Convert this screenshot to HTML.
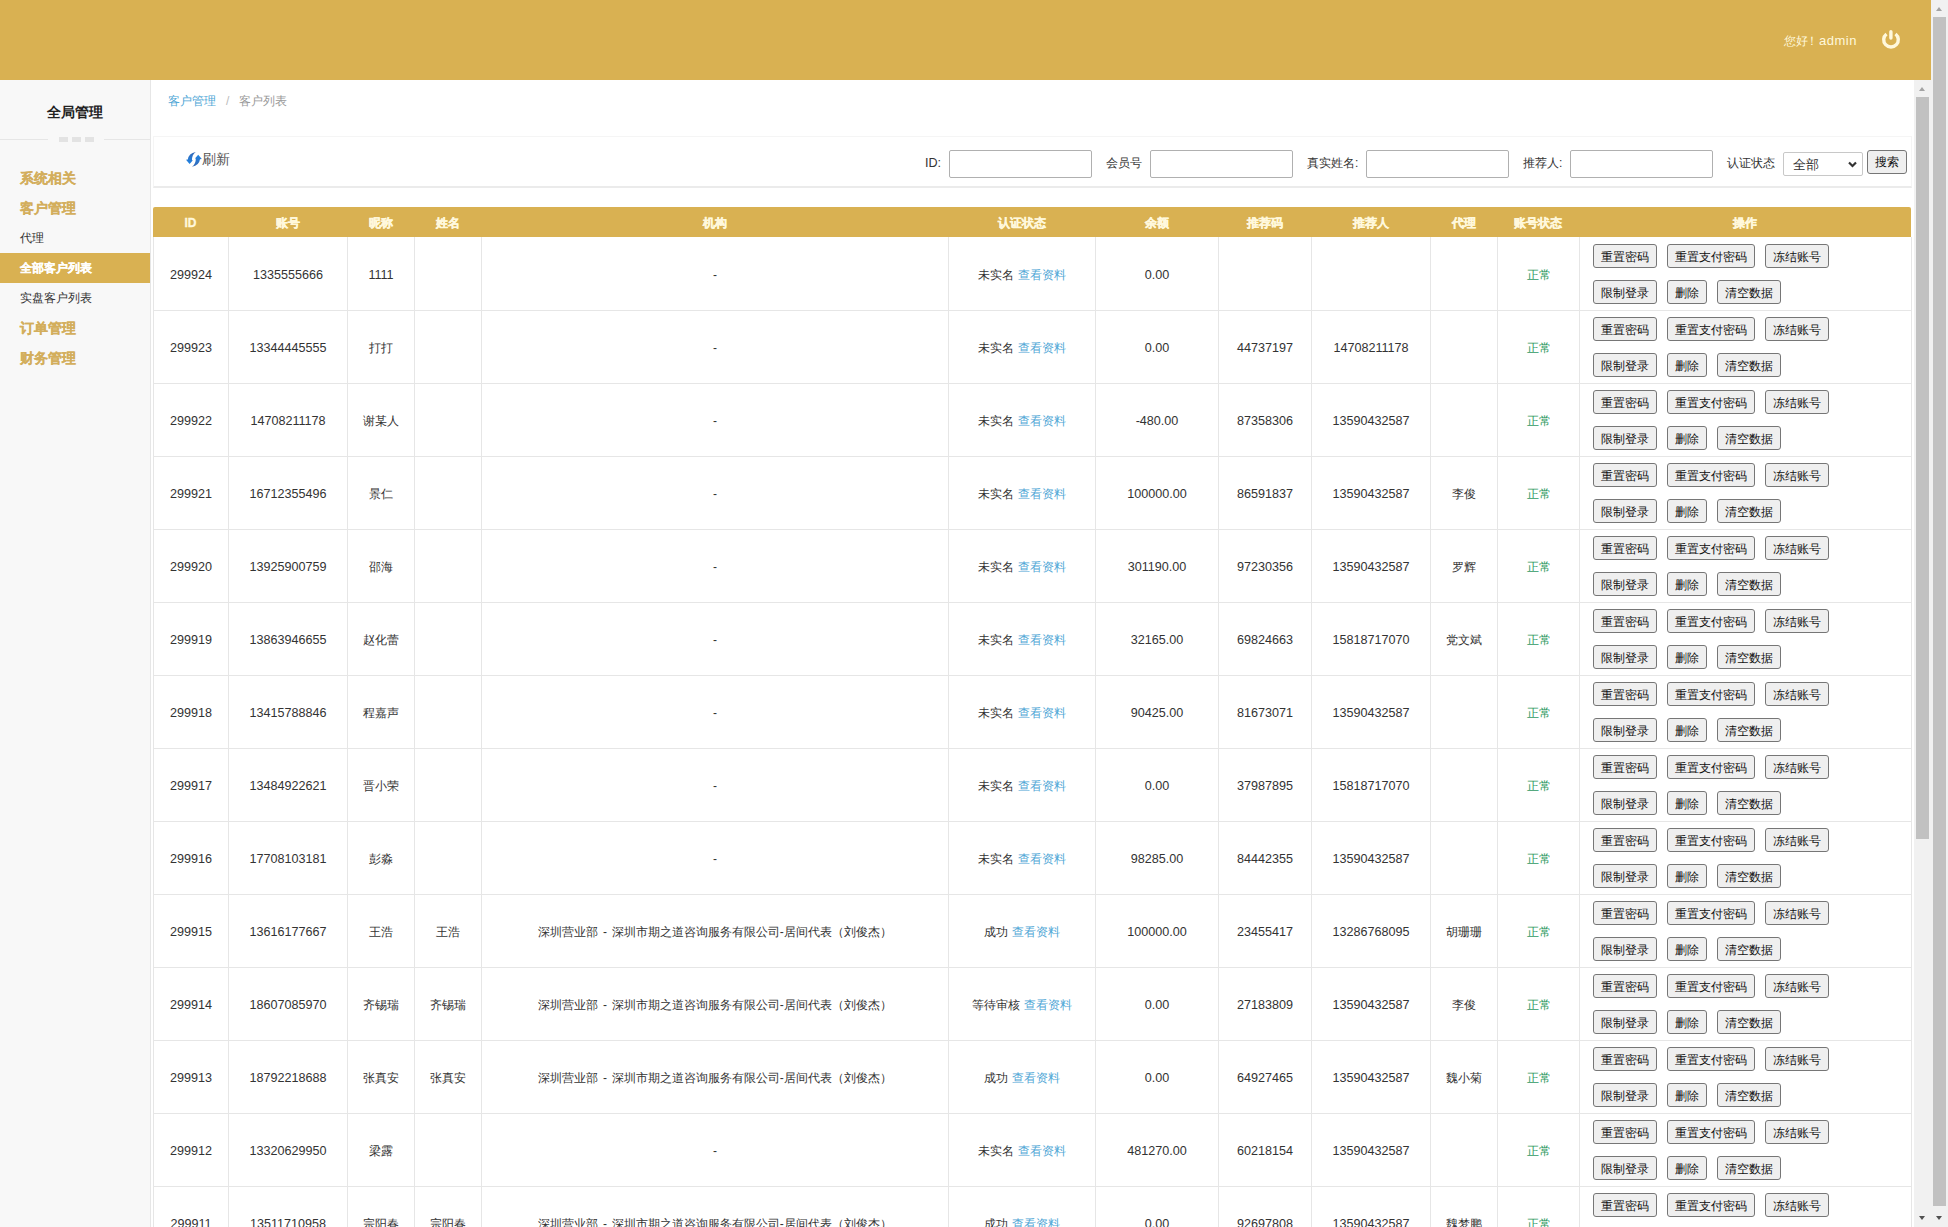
<!DOCTYPE html>
<html><head><meta charset="utf-8"><title>客户列表</title>
<style>
*{box-sizing:border-box;margin:0;padding:0}
html,body{width:1948px;height:1227px;overflow:hidden;background:#fff;font-family:"Liberation Sans",sans-serif;color:#333}
.abs{position:absolute}
#hdr{position:absolute;left:0;top:0;width:1931px;height:80px;background:#d9b152}
#hello{position:absolute;left:1784px;top:33px;font-size:12px;color:#fff8dc;white-space:nowrap;line-height:16px}
#hello .en{font-size:13px;letter-spacing:0.5px}
#power{position:absolute;left:1876px;top:26px;width:30px;height:26px}
#side{position:absolute;left:0;top:80px;width:151px;height:1147px;background:#f8f8f8;border-right:1px solid #e6e6e6}
#side .title{position:absolute;left:0;top:22px;width:150px;text-align:center;font-size:14px;font-weight:bold;color:#222;line-height:20px}
#side .ln{position:absolute;top:59px;height:1px;background:#e6e6e6}
#side .dash{position:absolute;top:57px;width:9px;height:5px;background:#e3e3e3}
#side .m{position:absolute;left:0;width:150px;height:30px;line-height:30px;padding-left:20px;white-space:nowrap}
#side .g{font-size:14px;font-weight:bold;color:#d3ae5c;-webkit-text-stroke:0.15px #d3ae5c}
#side .s{font-size:12px;color:#333}
#side .on{background:#d9b152;color:#fff;font-weight:bold;-webkit-text-stroke:0.2px #fff}
#crumb{position:absolute;left:168px;top:93px;font-size:12px;line-height:16px;white-space:nowrap;color:#999}
#crumb .a{color:#4fa7d6}
#crumb .sep{color:#bbb;padding:0 10px 0 10px}
#card{position:absolute;left:153px;top:136px;width:1759px;height:52px;border:1px solid #f5f5f5;border-bottom:2px solid #ebebeb;background:#fff}
.lbl{position:absolute;font-size:12px;line-height:16px;color:#333;white-space:nowrap}
.inp{position:absolute;top:150px;height:28px;width:143px;border:1px solid #b0b0b0;border-radius:2px;background:#fff}
#sel{position:absolute;left:1783px;top:152px;width:80px;height:24px;border:1px solid #c8c8c8;border-radius:2px;background:#fff;font-size:13px;line-height:22px;padding-top:1px;padding-left:9px;color:#333}
#srch{position:absolute;left:1867px;top:150px;width:40px;height:24px;border:1px solid #767676;border-radius:3px;background:#efefef;font-size:12px;line-height:22px;text-align:center;color:#111}
#thead{position:absolute;left:153px;top:207px;width:1758px;height:30px;background:#d9b152;border-radius:2px 2px 0 0}
.th{position:absolute;top:0;height:30px;line-height:32px;text-align:center;font-size:12px;font-weight:bold;color:#fff8dc;white-space:nowrap;-webkit-text-stroke:0.35px #fff8dc}
.vl{position:absolute;width:1px;background:#e6e6e6}
.hl{position:absolute;height:1px;background:#e6e6e6}
.td{position:absolute;text-align:center;font-size:12px;line-height:16px;color:#333;white-space:nowrap}
.num{font-size:12.6px;position:relative;top:0px}
.lk{color:#4fa7d6}
.ok{color:#2f9a62}
.btn{position:absolute;height:24px;border:1px solid #767676;border-radius:3px;background:#efefef;font-size:12px;line-height:22px;padding-top:1px;text-align:center;color:#111;white-space:nowrap}
.sb{position:absolute;background:#f1f1f1}
.thumb{position:absolute;background:#c1c1c1}
.arr{position:absolute;width:0;height:0;border-left:4px solid transparent;border-right:4px solid transparent}
</style></head><body>

<div id="hdr"></div>
<div id="hello">您好<span style="margin-left:-2px">！</span><span class="en" style="margin-left:1px">admin</span></div>
<svg id="power" viewBox="0 0 30 26"><path d="M10.5 8.0 A7.3 7.3 0 1 0 19.5 8.0" fill="none" stroke="#fff8dc" stroke-width="3.4"/><line x1="14.9" y1="5.7" x2="14.9" y2="12.1" stroke="#fff8dc" stroke-width="3.4" stroke-linecap="round"/></svg>
<div id="side">
<div class="title">全局管理</div>
<div class="ln" style="left:0;width:48px"></div>
<div class="dash" style="left:59px"></div><div class="dash" style="left:72px"></div><div class="dash" style="left:85px"></div>
<div class="ln" style="left:104px;width:46px"></div>
<div class="m g" style="top:83px">系统相关</div>
<div class="m g" style="top:113px">客户管理</div>
<div class="m s" style="top:143px">代理</div>
<div class="m s on" style="top:173px">全部客户列表</div>
<div class="m s" style="top:203px">实盘客户列表</div>
<div class="m g" style="top:233px">订单管理</div>
<div class="m g" style="top:263px">财务管理</div>
</div>
<div id="crumb"><span class="a">客户管理</span><span class="sep">/</span>客户列表</div>
<div id="card"></div>
<svg class="abs" style="left:182px;top:148px" width="24" height="22" viewBox="0 0 24 22"><defs><linearGradient id="g1" x1="0" y1="0" x2="0" y2="1"><stop offset="0" stop-color="#3568b5"/><stop offset="1" stop-color="#1f84e4"/></linearGradient><linearGradient id="g2" x1="0" y1="1" x2="0" y2="0"><stop offset="0" stop-color="#3568b5"/><stop offset="1" stop-color="#1f84e4"/></linearGradient></defs><path d="M13.8 4.0 Q6.6 5.4 5.8 11.5 L4.0 11.7 L7.6 15.9 L10.9 12.3 L10.0 12.2 Q9.9 6.6 13.8 4.0 Z" fill="url(#g1)"/><path d="M10.0 18.7 Q17.2 17.3 18.0 11.2 L19.8 11.0 L16.2 6.8 L12.9 10.4 L13.8 10.5 Q13.9 16.1 10.0 18.7 Z" fill="url(#g2)"/></svg>
<div class="lbl" style="left:202px;top:150px;font-size:14px;line-height:18px;color:#555">刷新</div>
<div class="lbl" style="left:925px;top:155px"><span class="num">ID:</span></div>
<div class="inp" style="left:949px"></div>
<div class="lbl" style="left:1106px;top:155px">会员号</div>
<div class="inp" style="left:1150px"></div>
<div class="lbl" style="left:1307px;top:155px">真实姓名:</div>
<div class="inp" style="left:1366px"></div>
<div class="lbl" style="left:1523px;top:155px">推荐人:</div>
<div class="inp" style="left:1570px"></div>
<div class="lbl" style="left:1727px;top:155px">认证状态</div>
<div id="sel">全部<svg class="abs" style="left:64px;top:8px" width="9" height="7" viewBox="0 0 9 7"><path d="M1 1.5 L4.5 5 L8 1.5" fill="none" stroke="#333" stroke-width="2.2"/></svg></div>
<div id="srch">搜索</div>
<div id="thead"></div>
<div class="th" style="left:153px;width:75px;top:207px">ID</div>
<div class="th" style="left:228px;width:119px;top:207px">账号</div>
<div class="th" style="left:347px;width:67px;top:207px">昵称</div>
<div class="th" style="left:414px;width:67px;top:207px">姓名</div>
<div class="th" style="left:481px;width:467px;top:207px">机构</div>
<div class="th" style="left:948px;width:147px;top:207px">认证状态</div>
<div class="th" style="left:1095px;width:123px;top:207px">余额</div>
<div class="th" style="left:1218px;width:93px;top:207px">推荐码</div>
<div class="th" style="left:1311px;width:119px;top:207px">推荐人</div>
<div class="th" style="left:1430px;width:67px;top:207px">代理</div>
<div class="th" style="left:1497px;width:82px;top:207px">账号状态</div>
<div class="th" style="left:1579px;width:332px;top:207px">操作</div>
<div class="vl" style="left:153px;top:237px;height:990px"></div>
<div class="vl" style="left:228px;top:237px;height:990px"></div>
<div class="vl" style="left:347px;top:237px;height:990px"></div>
<div class="vl" style="left:414px;top:237px;height:990px"></div>
<div class="vl" style="left:481px;top:237px;height:990px"></div>
<div class="vl" style="left:948px;top:237px;height:990px"></div>
<div class="vl" style="left:1095px;top:237px;height:990px"></div>
<div class="vl" style="left:1218px;top:237px;height:990px"></div>
<div class="vl" style="left:1311px;top:237px;height:990px"></div>
<div class="vl" style="left:1430px;top:237px;height:990px"></div>
<div class="vl" style="left:1497px;top:237px;height:990px"></div>
<div class="vl" style="left:1579px;top:237px;height:990px"></div>
<div class="vl" style="left:1911px;top:237px;height:990px"></div>
<div class="hl" style="left:153px;top:310px;width:1759px"></div>
<div class="hl" style="left:153px;top:383px;width:1759px"></div>
<div class="hl" style="left:153px;top:456px;width:1759px"></div>
<div class="hl" style="left:153px;top:529px;width:1759px"></div>
<div class="hl" style="left:153px;top:602px;width:1759px"></div>
<div class="hl" style="left:153px;top:675px;width:1759px"></div>
<div class="hl" style="left:153px;top:748px;width:1759px"></div>
<div class="hl" style="left:153px;top:821px;width:1759px"></div>
<div class="hl" style="left:153px;top:894px;width:1759px"></div>
<div class="hl" style="left:153px;top:967px;width:1759px"></div>
<div class="hl" style="left:153px;top:1040px;width:1759px"></div>
<div class="hl" style="left:153px;top:1113px;width:1759px"></div>
<div class="hl" style="left:153px;top:1186px;width:1759px"></div>
<div class="td" style="left:153px;width:76px;top:267px"><span class="num">299924</span></div>
<div class="td" style="left:228px;width:120px;top:267px"><span class="num">1335555666</span></div>
<div class="td" style="left:347px;width:68px;top:267px"><span class="num">1111</span></div>
<div class="td" style="left:481px;width:468px;top:267px">-</div>
<div class="td" style="left:948px;width:148px;top:267px">未实名 <span class="lk">查看资料</span></div>
<div class="td" style="left:1095px;width:124px;top:267px"><span class="num">0.00</span></div>
<div class="td" style="left:1497px;width:83px;top:267px"><span class="ok">正常</span></div>
<div class="btn" style="left:1593px;top:244px;width:64px">重置密码</div>
<div class="btn" style="left:1667px;top:244px;width:88px">重置支付密码</div>
<div class="btn" style="left:1765px;top:244px;width:64px">冻结账号</div>
<div class="btn" style="left:1593px;top:280px;width:64px">限制登录</div>
<div class="btn" style="left:1667px;top:280px;width:40px">删除</div>
<div class="btn" style="left:1717px;top:280px;width:64px">清空数据</div>
<div class="td" style="left:153px;width:76px;top:340px"><span class="num">299923</span></div>
<div class="td" style="left:228px;width:120px;top:340px"><span class="num">13344445555</span></div>
<div class="td" style="left:347px;width:68px;top:340px">打打</div>
<div class="td" style="left:481px;width:468px;top:340px">-</div>
<div class="td" style="left:948px;width:148px;top:340px">未实名 <span class="lk">查看资料</span></div>
<div class="td" style="left:1095px;width:124px;top:340px"><span class="num">0.00</span></div>
<div class="td" style="left:1218px;width:94px;top:340px"><span class="num">44737197</span></div>
<div class="td" style="left:1311px;width:120px;top:340px"><span class="num">14708211178</span></div>
<div class="td" style="left:1497px;width:83px;top:340px"><span class="ok">正常</span></div>
<div class="btn" style="left:1593px;top:317px;width:64px">重置密码</div>
<div class="btn" style="left:1667px;top:317px;width:88px">重置支付密码</div>
<div class="btn" style="left:1765px;top:317px;width:64px">冻结账号</div>
<div class="btn" style="left:1593px;top:353px;width:64px">限制登录</div>
<div class="btn" style="left:1667px;top:353px;width:40px">删除</div>
<div class="btn" style="left:1717px;top:353px;width:64px">清空数据</div>
<div class="td" style="left:153px;width:76px;top:413px"><span class="num">299922</span></div>
<div class="td" style="left:228px;width:120px;top:413px"><span class="num">14708211178</span></div>
<div class="td" style="left:347px;width:68px;top:413px">谢某人</div>
<div class="td" style="left:481px;width:468px;top:413px">-</div>
<div class="td" style="left:948px;width:148px;top:413px">未实名 <span class="lk">查看资料</span></div>
<div class="td" style="left:1095px;width:124px;top:413px"><span class="num">-480.00</span></div>
<div class="td" style="left:1218px;width:94px;top:413px"><span class="num">87358306</span></div>
<div class="td" style="left:1311px;width:120px;top:413px"><span class="num">13590432587</span></div>
<div class="td" style="left:1497px;width:83px;top:413px"><span class="ok">正常</span></div>
<div class="btn" style="left:1593px;top:390px;width:64px">重置密码</div>
<div class="btn" style="left:1667px;top:390px;width:88px">重置支付密码</div>
<div class="btn" style="left:1765px;top:390px;width:64px">冻结账号</div>
<div class="btn" style="left:1593px;top:426px;width:64px">限制登录</div>
<div class="btn" style="left:1667px;top:426px;width:40px">删除</div>
<div class="btn" style="left:1717px;top:426px;width:64px">清空数据</div>
<div class="td" style="left:153px;width:76px;top:486px"><span class="num">299921</span></div>
<div class="td" style="left:228px;width:120px;top:486px"><span class="num">16712355496</span></div>
<div class="td" style="left:347px;width:68px;top:486px">景仁</div>
<div class="td" style="left:481px;width:468px;top:486px">-</div>
<div class="td" style="left:948px;width:148px;top:486px">未实名 <span class="lk">查看资料</span></div>
<div class="td" style="left:1095px;width:124px;top:486px"><span class="num">100000.00</span></div>
<div class="td" style="left:1218px;width:94px;top:486px"><span class="num">86591837</span></div>
<div class="td" style="left:1311px;width:120px;top:486px"><span class="num">13590432587</span></div>
<div class="td" style="left:1430px;width:68px;top:486px">李俊</div>
<div class="td" style="left:1497px;width:83px;top:486px"><span class="ok">正常</span></div>
<div class="btn" style="left:1593px;top:463px;width:64px">重置密码</div>
<div class="btn" style="left:1667px;top:463px;width:88px">重置支付密码</div>
<div class="btn" style="left:1765px;top:463px;width:64px">冻结账号</div>
<div class="btn" style="left:1593px;top:499px;width:64px">限制登录</div>
<div class="btn" style="left:1667px;top:499px;width:40px">删除</div>
<div class="btn" style="left:1717px;top:499px;width:64px">清空数据</div>
<div class="td" style="left:153px;width:76px;top:559px"><span class="num">299920</span></div>
<div class="td" style="left:228px;width:120px;top:559px"><span class="num">13925900759</span></div>
<div class="td" style="left:347px;width:68px;top:559px">邵海</div>
<div class="td" style="left:481px;width:468px;top:559px">-</div>
<div class="td" style="left:948px;width:148px;top:559px">未实名 <span class="lk">查看资料</span></div>
<div class="td" style="left:1095px;width:124px;top:559px"><span class="num">301190.00</span></div>
<div class="td" style="left:1218px;width:94px;top:559px"><span class="num">97230356</span></div>
<div class="td" style="left:1311px;width:120px;top:559px"><span class="num">13590432587</span></div>
<div class="td" style="left:1430px;width:68px;top:559px">罗辉</div>
<div class="td" style="left:1497px;width:83px;top:559px"><span class="ok">正常</span></div>
<div class="btn" style="left:1593px;top:536px;width:64px">重置密码</div>
<div class="btn" style="left:1667px;top:536px;width:88px">重置支付密码</div>
<div class="btn" style="left:1765px;top:536px;width:64px">冻结账号</div>
<div class="btn" style="left:1593px;top:572px;width:64px">限制登录</div>
<div class="btn" style="left:1667px;top:572px;width:40px">删除</div>
<div class="btn" style="left:1717px;top:572px;width:64px">清空数据</div>
<div class="td" style="left:153px;width:76px;top:632px"><span class="num">299919</span></div>
<div class="td" style="left:228px;width:120px;top:632px"><span class="num">13863946655</span></div>
<div class="td" style="left:347px;width:68px;top:632px">赵化蕾</div>
<div class="td" style="left:481px;width:468px;top:632px">-</div>
<div class="td" style="left:948px;width:148px;top:632px">未实名 <span class="lk">查看资料</span></div>
<div class="td" style="left:1095px;width:124px;top:632px"><span class="num">32165.00</span></div>
<div class="td" style="left:1218px;width:94px;top:632px"><span class="num">69824663</span></div>
<div class="td" style="left:1311px;width:120px;top:632px"><span class="num">15818717070</span></div>
<div class="td" style="left:1430px;width:68px;top:632px">党文斌</div>
<div class="td" style="left:1497px;width:83px;top:632px"><span class="ok">正常</span></div>
<div class="btn" style="left:1593px;top:609px;width:64px">重置密码</div>
<div class="btn" style="left:1667px;top:609px;width:88px">重置支付密码</div>
<div class="btn" style="left:1765px;top:609px;width:64px">冻结账号</div>
<div class="btn" style="left:1593px;top:645px;width:64px">限制登录</div>
<div class="btn" style="left:1667px;top:645px;width:40px">删除</div>
<div class="btn" style="left:1717px;top:645px;width:64px">清空数据</div>
<div class="td" style="left:153px;width:76px;top:705px"><span class="num">299918</span></div>
<div class="td" style="left:228px;width:120px;top:705px"><span class="num">13415788846</span></div>
<div class="td" style="left:347px;width:68px;top:705px">程嘉声</div>
<div class="td" style="left:481px;width:468px;top:705px">-</div>
<div class="td" style="left:948px;width:148px;top:705px">未实名 <span class="lk">查看资料</span></div>
<div class="td" style="left:1095px;width:124px;top:705px"><span class="num">90425.00</span></div>
<div class="td" style="left:1218px;width:94px;top:705px"><span class="num">81673071</span></div>
<div class="td" style="left:1311px;width:120px;top:705px"><span class="num">13590432587</span></div>
<div class="td" style="left:1497px;width:83px;top:705px"><span class="ok">正常</span></div>
<div class="btn" style="left:1593px;top:682px;width:64px">重置密码</div>
<div class="btn" style="left:1667px;top:682px;width:88px">重置支付密码</div>
<div class="btn" style="left:1765px;top:682px;width:64px">冻结账号</div>
<div class="btn" style="left:1593px;top:718px;width:64px">限制登录</div>
<div class="btn" style="left:1667px;top:718px;width:40px">删除</div>
<div class="btn" style="left:1717px;top:718px;width:64px">清空数据</div>
<div class="td" style="left:153px;width:76px;top:778px"><span class="num">299917</span></div>
<div class="td" style="left:228px;width:120px;top:778px"><span class="num">13484922621</span></div>
<div class="td" style="left:347px;width:68px;top:778px">晋小荣</div>
<div class="td" style="left:481px;width:468px;top:778px">-</div>
<div class="td" style="left:948px;width:148px;top:778px">未实名 <span class="lk">查看资料</span></div>
<div class="td" style="left:1095px;width:124px;top:778px"><span class="num">0.00</span></div>
<div class="td" style="left:1218px;width:94px;top:778px"><span class="num">37987895</span></div>
<div class="td" style="left:1311px;width:120px;top:778px"><span class="num">15818717070</span></div>
<div class="td" style="left:1497px;width:83px;top:778px"><span class="ok">正常</span></div>
<div class="btn" style="left:1593px;top:755px;width:64px">重置密码</div>
<div class="btn" style="left:1667px;top:755px;width:88px">重置支付密码</div>
<div class="btn" style="left:1765px;top:755px;width:64px">冻结账号</div>
<div class="btn" style="left:1593px;top:791px;width:64px">限制登录</div>
<div class="btn" style="left:1667px;top:791px;width:40px">删除</div>
<div class="btn" style="left:1717px;top:791px;width:64px">清空数据</div>
<div class="td" style="left:153px;width:76px;top:851px"><span class="num">299916</span></div>
<div class="td" style="left:228px;width:120px;top:851px"><span class="num">17708103181</span></div>
<div class="td" style="left:347px;width:68px;top:851px">彭淼</div>
<div class="td" style="left:481px;width:468px;top:851px">-</div>
<div class="td" style="left:948px;width:148px;top:851px">未实名 <span class="lk">查看资料</span></div>
<div class="td" style="left:1095px;width:124px;top:851px"><span class="num">98285.00</span></div>
<div class="td" style="left:1218px;width:94px;top:851px"><span class="num">84442355</span></div>
<div class="td" style="left:1311px;width:120px;top:851px"><span class="num">13590432587</span></div>
<div class="td" style="left:1497px;width:83px;top:851px"><span class="ok">正常</span></div>
<div class="btn" style="left:1593px;top:828px;width:64px">重置密码</div>
<div class="btn" style="left:1667px;top:828px;width:88px">重置支付密码</div>
<div class="btn" style="left:1765px;top:828px;width:64px">冻结账号</div>
<div class="btn" style="left:1593px;top:864px;width:64px">限制登录</div>
<div class="btn" style="left:1667px;top:864px;width:40px">删除</div>
<div class="btn" style="left:1717px;top:864px;width:64px">清空数据</div>
<div class="td" style="left:153px;width:76px;top:924px"><span class="num">299915</span></div>
<div class="td" style="left:228px;width:120px;top:924px"><span class="num">13616177667</span></div>
<div class="td" style="left:347px;width:68px;top:924px">王浩</div>
<div class="td" style="left:414px;width:68px;top:924px">王浩</div>
<div class="td" style="left:481px;width:468px;top:924px"><span style="word-spacing:1.5px">深圳营业部 - 深圳市期之道咨询服务有限公司-居间代表（刘俊杰）</span></div>
<div class="td" style="left:948px;width:148px;top:924px">成功 <span class="lk">查看资料</span></div>
<div class="td" style="left:1095px;width:124px;top:924px"><span class="num">100000.00</span></div>
<div class="td" style="left:1218px;width:94px;top:924px"><span class="num">23455417</span></div>
<div class="td" style="left:1311px;width:120px;top:924px"><span class="num">13286768095</span></div>
<div class="td" style="left:1430px;width:68px;top:924px">胡珊珊</div>
<div class="td" style="left:1497px;width:83px;top:924px"><span class="ok">正常</span></div>
<div class="btn" style="left:1593px;top:901px;width:64px">重置密码</div>
<div class="btn" style="left:1667px;top:901px;width:88px">重置支付密码</div>
<div class="btn" style="left:1765px;top:901px;width:64px">冻结账号</div>
<div class="btn" style="left:1593px;top:937px;width:64px">限制登录</div>
<div class="btn" style="left:1667px;top:937px;width:40px">删除</div>
<div class="btn" style="left:1717px;top:937px;width:64px">清空数据</div>
<div class="td" style="left:153px;width:76px;top:997px"><span class="num">299914</span></div>
<div class="td" style="left:228px;width:120px;top:997px"><span class="num">18607085970</span></div>
<div class="td" style="left:347px;width:68px;top:997px">齐锡瑞</div>
<div class="td" style="left:414px;width:68px;top:997px">齐锡瑞</div>
<div class="td" style="left:481px;width:468px;top:997px"><span style="word-spacing:1.5px">深圳营业部 - 深圳市期之道咨询服务有限公司-居间代表（刘俊杰）</span></div>
<div class="td" style="left:948px;width:148px;top:997px">等待审核 <span class="lk">查看资料</span></div>
<div class="td" style="left:1095px;width:124px;top:997px"><span class="num">0.00</span></div>
<div class="td" style="left:1218px;width:94px;top:997px"><span class="num">27183809</span></div>
<div class="td" style="left:1311px;width:120px;top:997px"><span class="num">13590432587</span></div>
<div class="td" style="left:1430px;width:68px;top:997px">李俊</div>
<div class="td" style="left:1497px;width:83px;top:997px"><span class="ok">正常</span></div>
<div class="btn" style="left:1593px;top:974px;width:64px">重置密码</div>
<div class="btn" style="left:1667px;top:974px;width:88px">重置支付密码</div>
<div class="btn" style="left:1765px;top:974px;width:64px">冻结账号</div>
<div class="btn" style="left:1593px;top:1010px;width:64px">限制登录</div>
<div class="btn" style="left:1667px;top:1010px;width:40px">删除</div>
<div class="btn" style="left:1717px;top:1010px;width:64px">清空数据</div>
<div class="td" style="left:153px;width:76px;top:1070px"><span class="num">299913</span></div>
<div class="td" style="left:228px;width:120px;top:1070px"><span class="num">18792218688</span></div>
<div class="td" style="left:347px;width:68px;top:1070px">张真安</div>
<div class="td" style="left:414px;width:68px;top:1070px">张真安</div>
<div class="td" style="left:481px;width:468px;top:1070px"><span style="word-spacing:1.5px">深圳营业部 - 深圳市期之道咨询服务有限公司-居间代表（刘俊杰）</span></div>
<div class="td" style="left:948px;width:148px;top:1070px">成功 <span class="lk">查看资料</span></div>
<div class="td" style="left:1095px;width:124px;top:1070px"><span class="num">0.00</span></div>
<div class="td" style="left:1218px;width:94px;top:1070px"><span class="num">64927465</span></div>
<div class="td" style="left:1311px;width:120px;top:1070px"><span class="num">13590432587</span></div>
<div class="td" style="left:1430px;width:68px;top:1070px">魏小菊</div>
<div class="td" style="left:1497px;width:83px;top:1070px"><span class="ok">正常</span></div>
<div class="btn" style="left:1593px;top:1047px;width:64px">重置密码</div>
<div class="btn" style="left:1667px;top:1047px;width:88px">重置支付密码</div>
<div class="btn" style="left:1765px;top:1047px;width:64px">冻结账号</div>
<div class="btn" style="left:1593px;top:1083px;width:64px">限制登录</div>
<div class="btn" style="left:1667px;top:1083px;width:40px">删除</div>
<div class="btn" style="left:1717px;top:1083px;width:64px">清空数据</div>
<div class="td" style="left:153px;width:76px;top:1143px"><span class="num">299912</span></div>
<div class="td" style="left:228px;width:120px;top:1143px"><span class="num">13320629950</span></div>
<div class="td" style="left:347px;width:68px;top:1143px">梁露</div>
<div class="td" style="left:481px;width:468px;top:1143px">-</div>
<div class="td" style="left:948px;width:148px;top:1143px">未实名 <span class="lk">查看资料</span></div>
<div class="td" style="left:1095px;width:124px;top:1143px"><span class="num">481270.00</span></div>
<div class="td" style="left:1218px;width:94px;top:1143px"><span class="num">60218154</span></div>
<div class="td" style="left:1311px;width:120px;top:1143px"><span class="num">13590432587</span></div>
<div class="td" style="left:1497px;width:83px;top:1143px"><span class="ok">正常</span></div>
<div class="btn" style="left:1593px;top:1120px;width:64px">重置密码</div>
<div class="btn" style="left:1667px;top:1120px;width:88px">重置支付密码</div>
<div class="btn" style="left:1765px;top:1120px;width:64px">冻结账号</div>
<div class="btn" style="left:1593px;top:1156px;width:64px">限制登录</div>
<div class="btn" style="left:1667px;top:1156px;width:40px">删除</div>
<div class="btn" style="left:1717px;top:1156px;width:64px">清空数据</div>
<div class="td" style="left:153px;width:76px;top:1216px"><span class="num">299911</span></div>
<div class="td" style="left:228px;width:120px;top:1216px"><span class="num">13511710958</span></div>
<div class="td" style="left:347px;width:68px;top:1216px">宗阳春</div>
<div class="td" style="left:414px;width:68px;top:1216px">宗阳春</div>
<div class="td" style="left:481px;width:468px;top:1216px"><span style="word-spacing:1.5px">深圳营业部 - 深圳市期之道咨询服务有限公司-居间代表（刘俊杰）</span></div>
<div class="td" style="left:948px;width:148px;top:1216px">成功 <span class="lk">查看资料</span></div>
<div class="td" style="left:1095px;width:124px;top:1216px"><span class="num">0.00</span></div>
<div class="td" style="left:1218px;width:94px;top:1216px"><span class="num">92697808</span></div>
<div class="td" style="left:1311px;width:120px;top:1216px"><span class="num">13590432587</span></div>
<div class="td" style="left:1430px;width:68px;top:1216px">魏梦鹏</div>
<div class="td" style="left:1497px;width:83px;top:1216px"><span class="ok">正常</span></div>
<div class="btn" style="left:1593px;top:1193px;width:64px">重置密码</div>
<div class="btn" style="left:1667px;top:1193px;width:88px">重置支付密码</div>
<div class="btn" style="left:1765px;top:1193px;width:64px">冻结账号</div>
<div class="sb" style="left:1914px;top:80px;width:17px;height:1147px"></div>
<div class="arr" style="left:1919px;top:87px;border-bottom:4px solid #a3a3a3;border-left-width:3.5px;border-right-width:3.5px"></div>
<div class="thumb" style="left:1916px;top:97px;width:13px;height:742px"></div>
<div class="arr" style="left:1919px;top:1216px;border-top:4px solid #505050;border-left-width:3.5px;border-right-width:3.5px"></div>
<div class="sb" style="left:1931px;top:0;width:17px;height:1227px"></div>
<div class="arr" style="left:1936px;top:7px;border-bottom:4px solid #a3a3a3;border-left-width:3.5px;border-right-width:3.5px"></div>
<div class="thumb" style="left:1933px;top:17px;width:13px;height:1189px"></div>
<div class="arr" style="left:1936px;top:1216px;border-top:4px solid #505050;border-left-width:3.5px;border-right-width:3.5px"></div>
</body></html>
